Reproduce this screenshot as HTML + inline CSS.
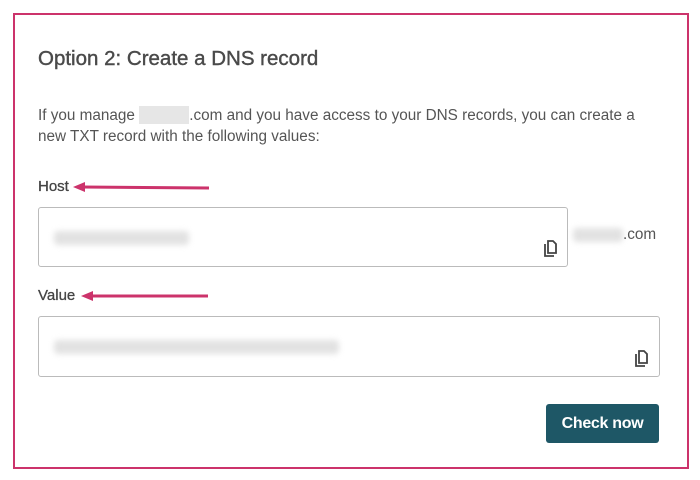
<!DOCTYPE html>
<html><head><style>
body{margin:0;width:700px;height:480px;background:#fff;font-family:"Liberation Sans",sans-serif;position:relative;overflow:hidden}
.frame{position:absolute;left:13px;top:13px;width:672px;height:452px;border:2px solid #cc336b;box-sizing:content-box}
.t{position:absolute;color:#555;white-space:nowrap}
.box{position:absolute;border:1px solid #bbb;border-radius:3px;background:#fff}
.blur{position:absolute;background:#e2e2e2;filter:blur(3px);border-radius:4px}
.btn{position:absolute;left:546px;top:404px;width:113px;height:39px;background:#1e5766;border-radius:3px;color:#fff;font-size:16px;font-weight:bold;text-align:center;line-height:39px;letter-spacing:-0.3px}
</style></head><body>
<div class="frame"></div>
<div class="t" style="left:38px;top:47px;font-size:20.5px;color:#4a4a4a;-webkit-text-stroke:0.4px #4a4a4a">Option 2: Create a DNS record</div>
<div class="t" style="left:38px;top:106px;font-size:15.3px">If you manage <span style="display:inline-block;width:50px;height:18px;background:#e6e6e6;vertical-align:-4px"></span>.com and you have access to your DNS records, you can create a</div>
<div class="t" style="left:38px;top:128px;font-size:15.3px">new TXT record with the following values:</div>
<div class="t" style="left:38px;top:178px;font-size:15px;color:#444;-webkit-text-stroke:0.3px #444">Host</div>
<svg style="position:absolute;left:72px;top:180px" width="140" height="14"><path d="M1 7L13 2V12Z" fill="#cc336b"/><path d="M10 7L137 8" stroke="#cc336b" stroke-width="3"/></svg>
<div class="box" style="left:38px;top:207px;width:528px;height:58px"></div>
<div class="blur" style="left:54px;top:231px;width:135px;height:14px"></div>
<svg style="position:absolute;left:542px;top:240px" width="16" height="18" viewBox="0 0 16 18"><path d="M3 4V16H12" fill="none" stroke="#444" stroke-width="1.8"/><path d="M6 1H11L14 4V13H6Z" fill="none" stroke="#444" stroke-width="1.8"/></svg>
<div class="blur" style="left:573px;top:228px;width:50px;height:14px"></div>
<div class="t" style="left:623px;top:226px;font-size:15.3px">.com</div>
<div class="t" style="left:38px;top:287px;font-size:15px;color:#444;-webkit-text-stroke:0.3px #444">Value</div>
<svg style="position:absolute;left:80px;top:289px" width="132" height="14"><path d="M1 7L13 2V12Z" fill="#cc336b"/><path d="M10 7L128 7" stroke="#cc336b" stroke-width="3"/></svg>
<div class="box" style="left:38px;top:316px;width:620px;height:59px"></div>
<div class="blur" style="left:54px;top:340px;width:285px;height:14px"></div>
<svg style="position:absolute;left:633px;top:350px" width="16" height="18" viewBox="0 0 16 18"><path d="M3 4V16H12" fill="none" stroke="#444" stroke-width="1.8"/><path d="M6 1H11L14 4V13H6Z" fill="none" stroke="#444" stroke-width="1.8"/></svg>
<div class="btn">Check now</div>
</body></html>
